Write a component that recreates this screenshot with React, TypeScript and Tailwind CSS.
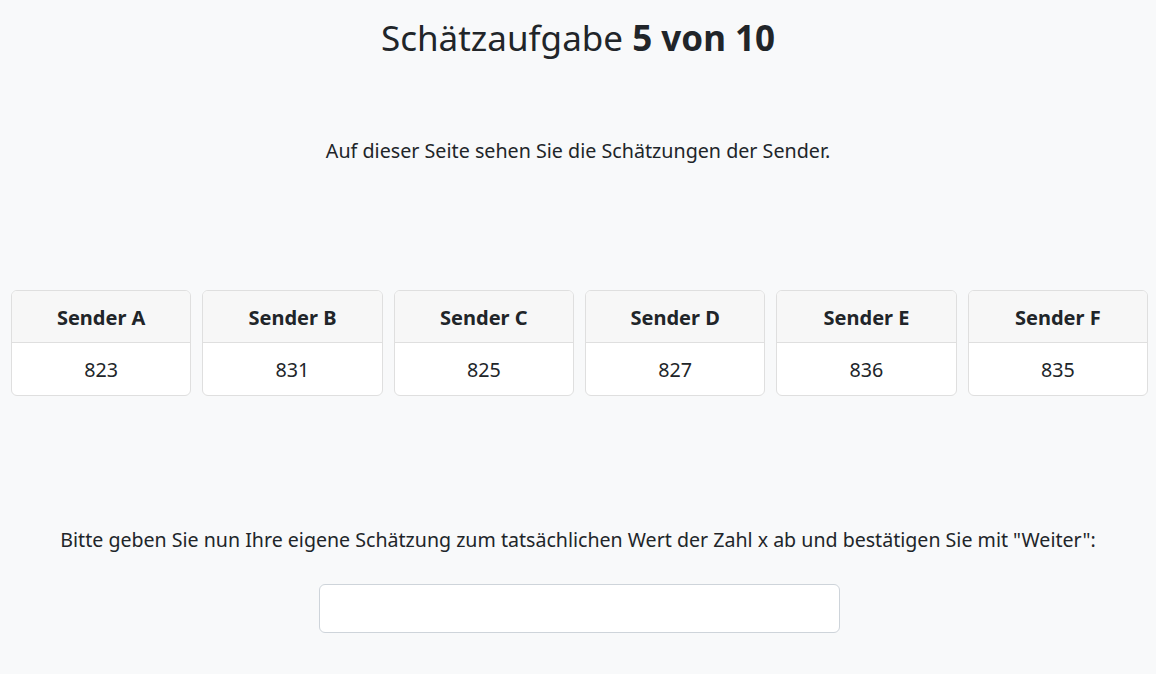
import React from "react";

const senders = [
  { name: "Sender A", value: "823" },
  { name: "Sender B", value: "831" },
  { name: "Sender C", value: "825" },
  { name: "Sender D", value: "827" },
  { name: "Sender E", value: "836" },
  { name: "Sender F", value: "835" },
];

export default function App() {
  return (
    <div
      className="min-h-[674px] w-full bg-[#f8f9fa] text-[#212529]"
      style={{ fontFamily: '"Noto Sans", "Open Sans", sans-serif' }}
    >
      <div className="flex flex-col items-center">
        <h1 className="mt-[14px] h-[48px] text-[35px] leading-[48px] font-normal">
          Schätzaufgabe <span className="font-bold">5 von 10</span>
        </h1>
        <p className="mt-[74px] text-[19.7px] leading-[30px]">
          Auf dieser Seite sehen Sie die Schätzungen der Sender.
        </p>
      </div>
      <div className="ml-[11px] mr-[8px] mt-[124px] grid grid-cols-6 gap-[11px]">
        {senders.map((s) => (
          <div
            key={s.name}
            className="overflow-hidden rounded-[6px] border border-[#dfdfdf] bg-white"
          >
            <div className="flex h-[52px] items-center justify-center border-b border-[#dfdfdf] bg-[#f7f7f7] pt-[2px] text-[20px] font-bold">
              {s.name}
            </div>
            <div className="flex h-[52px] items-center justify-center pt-[2px] text-[19.7px]">
              {s.value}
            </div>
          </div>
        ))}
      </div>
      <div className="flex flex-col items-center">
        <p className="mt-[129px] text-[19.6px] leading-[30px]">
          Bitte geben Sie nun Ihre eigene Schätzung zum tatsächlichen Wert der Zahl x ab und bestätigen Sie mit "Weiter":
        </p>
        <input
          type="text"
          className="ml-[2px] mt-[29px] h-[49px] w-[521px] rounded-[6px] border border-[#ced4da] bg-white px-4 text-[20px] outline-none"
        />
      </div>
    </div>
  );
}
